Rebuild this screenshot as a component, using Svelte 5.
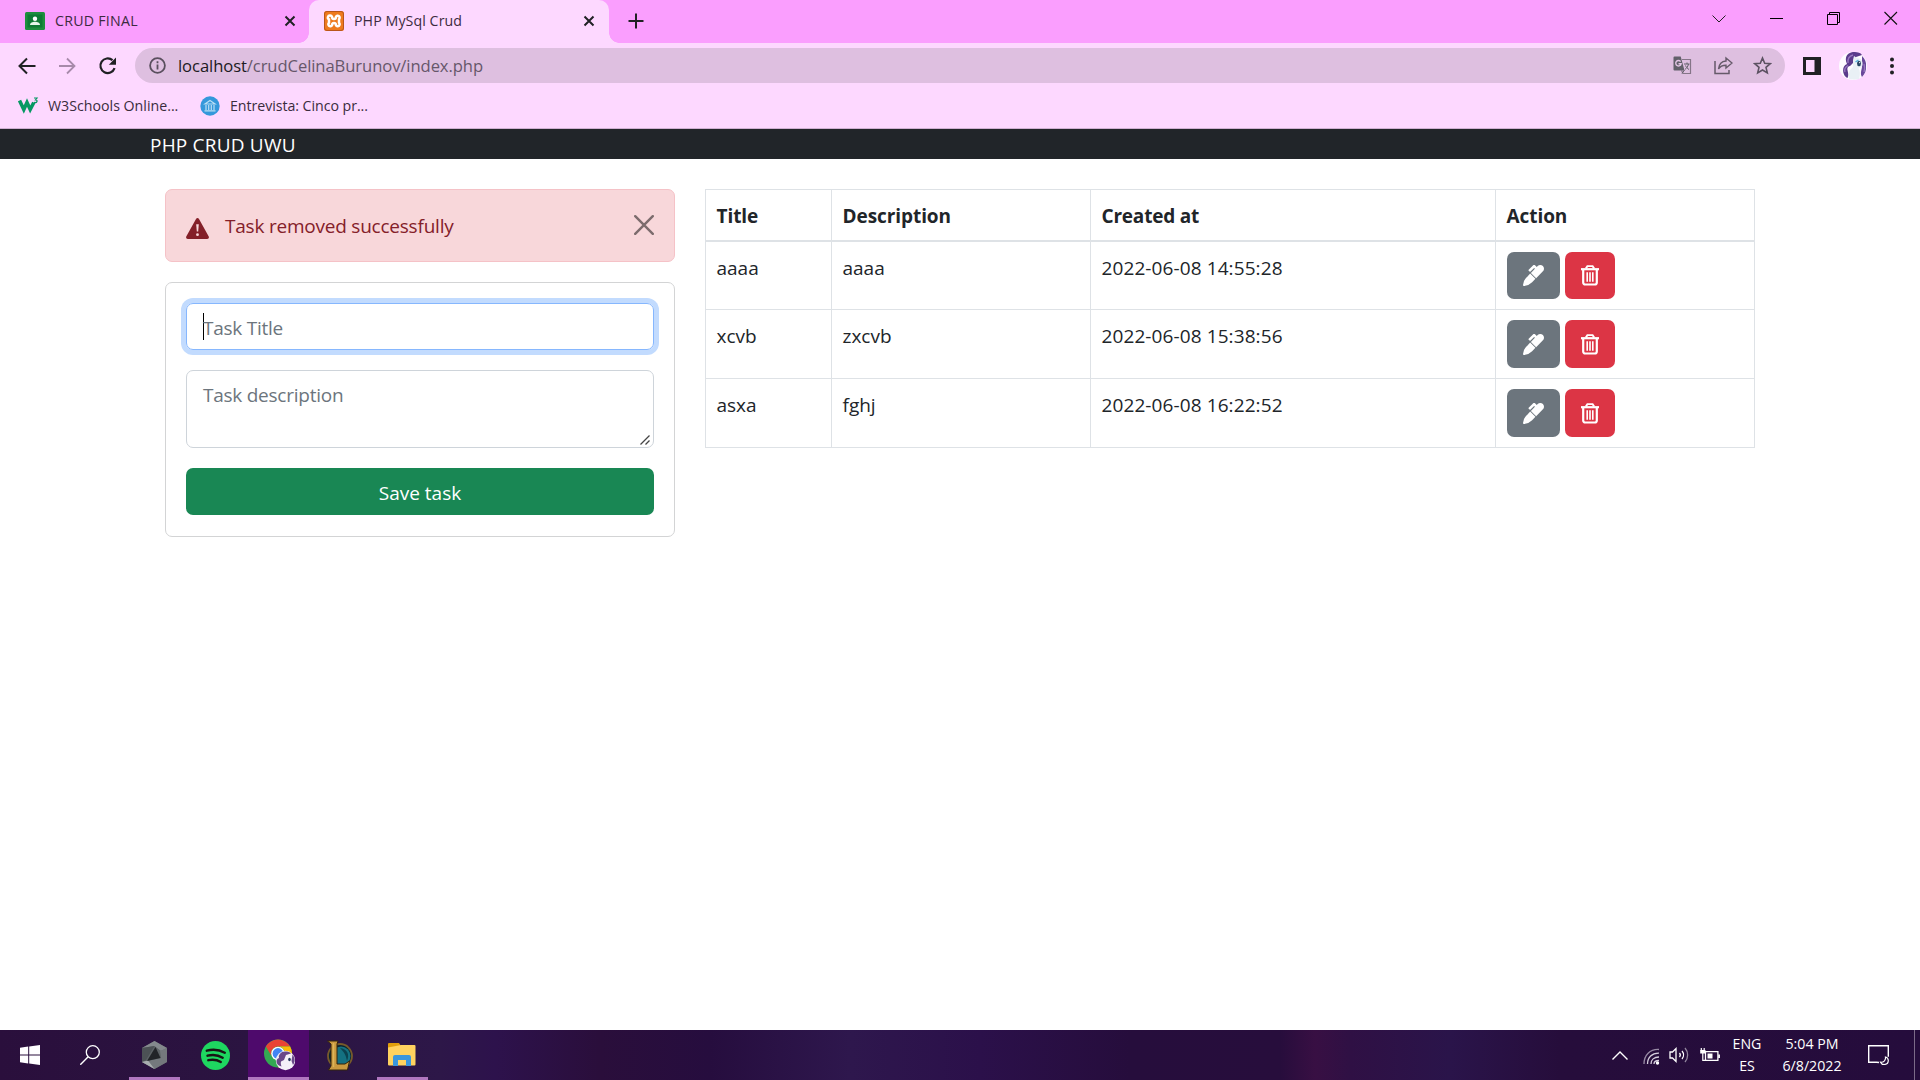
<script>
  const rows = [
    { title: 'aaaa', description: 'aaaa', created: '2022-06-08 14:55:28' },
    { title: 'xcvb', description: 'zxcvb', created: '2022-06-08 15:38:56' },
    { title: 'asxa', description: 'fghj', created: '2022-06-08 16:22:52' }
  ];
</script>

<div class="screen">
  <div class="tabs">
    <div class="tab first">
      <svg class="fav" width="20" height="20" viewBox="0 0 20 20"><rect width="20" height="18" y="1" rx="1.500" fill="#1e8e3e"/><rect x="2.500" y="3.500" width="15" height="13" fill="#0f7a34"/><circle cx="10" cy="7.800" r="2.200" fill="#fff"/><path d="M5 14c0-2.300 2.500-3.200 5-3.200s5 .9 5 3.200z" fill="#e6f5ea"/></svg>
      <span class="tab-text t1">CRUD FINAL</span>
      <svg class="x" width="12" height="12" viewBox="0 0 12 12"><path d="M1.500 1.500l9 9M10.500 1.500l-9 9" stroke="#202124" stroke-width="2"/></svg>
    </div>
    <div class="tab active">
      <svg class="fav" width="20" height="20" viewBox="0 0 20 20"><rect width="20" height="20" rx="2.500" fill="#ee7a1f"/><rect x=".5" y=".5" width="19" height="19" rx="2.500" fill="none" stroke="#b9561a"/><path d="M6 4.500a2 2 0 0 0-1 3.800v3.400a2 2 0 1 0 3 2.600c0-3 4-3 4 0a2 2 0 1 0 3-2.600V8.300a2 2 0 1 0-3-2.600c0 3-4 3-4 0a2 2 0 0 0-2-1.200z" fill="none" stroke="#fff" stroke-width="2.500"/></svg>
      <span class="tab-text t2">PHP MySql Crud</span>
      <svg class="x" width="12" height="12" viewBox="0 0 12 12"><path d="M1.500 1.500l9 9M10.500 1.500l-9 9" stroke="#202124" stroke-width="2"/></svg>
    </div>
    <svg class="plus" width="16" height="16" viewBox="0 0 16 16"><path d="M8 .5v15M.5 8h15" stroke="#202124" stroke-width="2"/></svg>
    <div class="window-buttons">
      <svg width="58" height="38" viewBox="0 0 58 38"><path d="M22.500 15.500l6.500 6.500 6.500-6.500" fill="none" stroke="#222"/></svg>
      <svg width="57" height="38" viewBox="0 0 57 38"><path d="M22 18.500h13" stroke="#000"/></svg>
      <svg width="57" height="38" viewBox="0 0 57 38"><path d="M22.500 14.500h10v10h-10zM24.500 14.500v-2h10v10h-2" fill="none" stroke="#000"/></svg>
      <svg width="58" height="38" viewBox="0 0 58 38"><path d="M22.500 12l12.500 12.500M35 12L22.500 24.500" stroke="#111" stroke-width="1.100"/></svg>
    </div>
  </div>

  <div class="toolbar">
    <div class="nav-icons">
      <svg width="18" height="18" viewBox="0 0 18 18"><path d="M17.500 9H2M9 1.500L1.500 9 9 16.500" fill="none" stroke="#202124" stroke-width="2"/></svg>
      <svg width="18" height="18" viewBox="0 0 18 18"><path d="M1 9h15M9 1.500L16.500 9 9 16.500" fill="none" stroke="#a78aaa" stroke-width="1.800"/></svg>
      <svg width="20" height="20" viewBox="0 0 20 20"><path d="M14.500 4.200A7.300 7.300 0 1 0 16.600 12.200" fill="none" stroke="#202124" stroke-width="2.200"/><path d="M18 1.500v7.200h-7.200z" fill="#202124"/></svg>
    </div>
    <div class="omnibox">
      <svg class="info" width="17" height="17" viewBox="0 0 17 17"><circle cx="8.500" cy="8.500" r="7.400" fill="none" stroke="#5a4f5e" stroke-width="1.800"/><path d="M8.500 7.600v4.900M8.500 4.300v1.900" stroke="#5a4f5e" stroke-width="1.800"/></svg>
      <span class="url"><b>localhost</b>/crudCelinaBurunov/index.php</span>
      <svg class="translate" width="19" height="19" viewBox="0 0 19 19"><path d="M9 3.500h8.500v14H10l-1.500-3" fill="none" stroke="#857588" stroke-width="1.200"/><path d="M1.500.5h6.200l3.800 14h-10a1 1 0 0 1-1-1v-12a1 1 0 0 1 1-1z" fill="#62606a"/><path d="M7.600 5.600a2.700 2.700 0 1 0 .5 2.200H5.500" fill="none" stroke="#e2c4e4" stroke-width="1.400"/><path d="M11 8h5.500M14 6.500V8M15.500 8c-.5 3-2.500 4.500-3.500 5.500M12.500 9.500c.5 1.500 2 3 3.500 4M11.500 14l-2.500 3.500" fill="none" stroke="#62606a" stroke-width="1"/></svg>
      <svg class="share" width="19" height="19" viewBox="0 0 19 19"><path d="M1 5v12.500h14V14" fill="none" stroke="#665a6a" stroke-width="1.500"/><path d="M12 2l6 5-6 5V9.200c-4 0-6 1.300-7.500 3.800C5 8.500 7.500 5.300 12 5z" fill="none" stroke="#665a6a" stroke-width="1.400"/></svg>
      <svg class="star" width="19" height="19" viewBox="0 0 19 19"><path d="M9.500 2l2.200 5.200 5.600.5-4.300 3.700 1.300 5.500-4.800-2.900-4.800 2.900L6 11.400 1.700 7.700l5.600-.5z" fill="none" stroke="#5c5262" stroke-width="1.600"/></svg>
    </div>
    <svg class="panel" width="18" height="18" viewBox="0 0 18 18"><path d="M0 0h18v18H0zM3 3v12h8.500V3z" fill="#202124" fill-rule="evenodd"/></svg>
    <svg class="avatar" width="28" height="28" viewBox="0 0 28 28">
      <circle cx="14" cy="14" r="14" fill="#fdfbff"/>
      <path d="M8 12C5.500 7 7 2 12 .5c4-1 9-.5 11 2.500l-6 2-3 6-3 3c-2 0-3 2-2.500 4 .5 3 1.500 5 0 8C3.500 24 2 14 8 12z" fill="#5b3b8c"/>
      <path d="M23 4c3 3 4.500 6 4 10 .5 4-1 8-4 11-2-3-.5-7 0-10z" fill="#6a479b"/>
      <path d="M9 11c-.5-4 1-7 5-8M6 20c-1-3 .5-5 3-6.500M25 20c1-3 1-5 0-8" stroke="#9877c0" fill="none" stroke-width="1.300"/>
      <path d="M14 8l1-4 3 2c4 0 6 3 5.500 6.500 0 2-2 3.500-4 3.500 2 3 1.500 7 .5 11l-5 .5-5-.5c0-4-1-5 1-9l3-3z" fill="#e9f0f5"/>
      <ellipse cx="20" cy="11.500" rx="2" ry="2.700" fill="#284866"/>
      <path d="M16.500 10l3-2" stroke="#58b5df" stroke-width="1.500"/>
      <circle cx="20.600" cy="10.600" r=".6" fill="#fff"/>
    </svg>
    <svg class="dots" width="4" height="18" viewBox="0 0 4 18"><g fill="#202124"><circle cx="2" cy="2.500" r="2"/><circle cx="2" cy="9" r="2"/><circle cx="2" cy="15.500" r="2"/></g></svg>
  </div>

  <div class="bookmarks">
    <svg class="w3" width="21" height="17" viewBox="0 0 21 17"><path d="M1.500 3.500l4.300 9 3.200-7 3.200 7 3.600-7" fill="none" stroke="#059862" stroke-width="3.600"/><path d="M16 1h3l-1.500 1.900c2.500 0 2 3.300-1.500 2.500" fill="none" stroke="#059862" stroke-width="1.200"/></svg>
    <span class="b1">W3Schools Online...</span>
    <svg class="bank" width="20" height="20" viewBox="0 0 20 20"><circle cx="10" cy="10" r="9.700" fill="#3498db"/><path d="M5 8h10l-5-3.500zM6 9v5M8.700 9v5M11.300 9v5M14 9v5M4.500 14.800h11" stroke="#b9def4" stroke-width="1.200" fill="none"/></svg>
    <span class="b2">Entrevista: Cinco pr...</span>
  </div>

  <div class="navbar">PHP CRUD UWU</div>

  <main>
    <section class="left">
      <div class="alert">
        <svg class="warn" width="23" height="21" viewBox="0 0 23 21"><path d="M10 .9c.7-1.200 2.300-1.200 3 0l9.600 17.300c.8 1.300 0 2.800-1.400 2.800H1.800C.4 21-.4 19.500.4 18.200z" fill="#842029"/><path d="M10.200 6.200h2.600l-.6 7.300h-1.400z" fill="#f8d7da"/><circle cx="11.500" cy="16.700" r="1.400" fill="#f8d7da"/></svg>
        <span class="p0">Task removed successfully</span>
        <svg class="close" width="20" height="20" viewBox="0 0 20 20"><path d="M1.200 1.200l17.600 17.600M18.800 1.200L1.200 18.800" stroke="#7c6c6d" stroke-width="2.400" stroke-linecap="round"/></svg>
      </div>
      <form class="card">
        <div class="field focus"><i class="caret"></i><span class="p1">Task Title</span></div>
        <div class="field area"><span class="p2">Task description</span>
          <svg class="grip" width="10" height="10" viewBox="0 0 10 10"><path d="M.5 9.500l9-9M5.500 9.500l4-4" stroke="#444" stroke-width="1.300"/></svg>
        </div>
        <button type="button" class="save"><span>Save task</span></button>
      </form>
    </section>

    <table>
      <colgroup><col class="c1"><col class="c2"><col class="c3"><col class="c4"></colgroup>
      <thead>
        <tr><th>Title</th><th>Description</th><th class="created">Created at</th><th>Action</th></tr>
      </thead>
      <tbody>
        {#each rows as row}
          <tr>
            <td>{row.title}</td>
            <td>{row.description}</td>
            <td class="date">{row.created}</td>
            <td class="act">
              <div class="actions">
                <span class="btn edit"><svg width="21" height="21" viewBox="0 0 512 512"><path fill="#fff" d="M93.950 290.030A327.038 327.038 0 0 0 .17 485.110l-.03.23c-1.700 15.280 11.210 28.200 26.490 26.510a327.020 327.020 0 0 0 195.340-93.800l81-81-128.020-128.020-81 87.200zM485.490 26.510c-35.350-35.350-92.670-35.350-128.020 0l-21.760 21.760-36.560-36.550c-15.620-15.620-40.950-15.620-56.560 0L138.470 115.840c-6.250 6.250-6.250 16.380 0 22.630l22.620 22.620c6.250 6.250 16.380 6.250 22.630 0l87.150-87.150 19.590 19.590L191.980 192 320 320.020l165.490-165.490c35.350-35.350 35.350-92.660 0-128.020z"/></svg></span>
                <span class="btn delete"><svg width="18" height="21" viewBox="0 0 18 21"><path d="M2.200 4.500V17.500a2 2 0 0 0 2 2h9.600a2 2 0 0 0 2-2V4.500" fill="none" stroke="#fff" stroke-width="2.200"/><path d="M0 4.200h18" stroke="#fff" stroke-width="2.200"/><path d="M4.800 3.500l1.600-2.400h5.200l1.600 2.400" fill="none" stroke="#fff" stroke-width="1.900"/><path d="M6.200 7.200v9.500M9 7.200v9.500M11.800 7.200v9.500" stroke="#fff" stroke-width="1.600"/></svg></span>
              </div>
            </td>
          </tr>
        {/each}
      </tbody>
    </table>
  </main>

  <footer>
    <div class="task start"><svg width="20" height="20" viewBox="0 0 20 20"><path d="M0 2.800l8.200-1.200v7.900H0zM9.200 1.400L20 0v9.500H9.200zM0 10.500h8.200v7.900L0 17.200zM9.200 10.500H20V20L9.200 18.600z" fill="#fff"/></svg></div>
    <div class="task search"><svg width="20" height="20" viewBox="0 0 20 20"><circle cx="12.800" cy="7.200" r="6.500" fill="none" stroke="#fff" stroke-width="1.300"/><path d="M8.200 11.800L.3 19.700" stroke="#fff" stroke-width="1.400"/></svg></div>
    <div class="task open cube"><svg width="27" height="28" viewBox="0 0 27 28"><path d="M13.500 0L26 7v14l-12.500 7L1 21V7z" fill="#5d6266"/><path d="M13.500 0L26 7l-6 3-6.500-5L1 7z" fill="#84898d"/><path d="M1 7l12.500-2L5 19l-4 2z" fill="#4c5155"/><path d="M26 7v14l-12.500 7L1 21l5-1 14-3-1-7z" fill="#74787d"/><path d="M13.500 28L1 21l6-1.500z" fill="#a9adb0"/><path d="M14.500 6L19.500 17 6 20z" fill="#222428"/></svg></div>
    <div class="task spotify"><svg width="29" height="29" viewBox="0 0 29 29"><circle cx="14.500" cy="14.500" r="14.500" fill="#1ed760"/><path d="M5.800 9.700c6.200-1.600 12.500-1 18 2M6.500 14.700c5.500-1.400 10.700-.7 15.200 2M7.300 19.200c4.500-1 8.700-.5 12.500 1.800" fill="none" stroke="#191414" stroke-width="2.400" stroke-linecap="round"/></svg></div>
    <div class="task open chrome"><svg width="31" height="32" viewBox="0 0 31 32">
      <circle cx="14" cy="14.500" r="14" fill="#34a853"/>
      <path d="M1.900 7.500A14 14 0 0 1 26.100 7.500H14a7 7 0 0 0-6.200 10z" fill="#ea4335"/>
      <path d="M26.100 7.500A14 14 0 0 1 14 28.500l6-10.500a7 7 0 0 0-6-10.500z" fill="#fbbc05"/>
      <circle cx="14" cy="14.500" r="6.800" fill="#fff"/><circle cx="14" cy="14.500" r="5.400" fill="#4285f4"/>
      <circle cx="21.500" cy="21.500" r="9.700" fill="#f4f0f8"/>
      <path d="M15 19c-1-3 2-6.500 6-6.500 3 0 5 .5 6 2l-5 1.500-2 5-3 1.500c-.5 2 0 3 .5 5-3-.5-5-2.500-5-5 0-2 1-3 2.500-3.500z" fill="#694889"/>
      <path d="M28.500 15.500c2.500 3 3 7 .5 10.500l-1.500-4z" fill="#694889"/>
      <ellipse cx="25.500" cy="20.500" rx="1.300" ry="1.800" fill="#26395c"/></svg></div>
    <div class="task lol"><svg width="28" height="31" viewBox="0 0 28 31"><circle cx="15" cy="16" r="12" fill="#0c2430" stroke="#765a2b" stroke-width="1.800"/><circle cx="16" cy="16" r="9.500" fill="#147181"/><path d="M15 8c7 1 10 6 7 13-1-6-3-9-7-13z" fill="#0b4350"/><path d="M2.500 1h10.500l-1 3v20H20l4.500-3-2 9H3.500L6 26V4z" fill="#c9993f" stroke="#33240d"/><path d="M8.500 3v24" stroke="#dcb559" stroke-width="1.500"/></svg></div>
    <div class="task open explorer"><svg width="28" height="24" viewBox="0 0 28 24"><path d="M0 1a1 1 0 0 1 1-1h10l2 3v5H0z" fill="#e09e0b"/><path d="M0 4.500L13 2h13.500a1 1 0 0 1 1 1v18.500a1 1 0 0 1-1 1H1a1 1 0 0 1-1-1z" fill="#ffd25f"/><path d="M5 23v-9a2 2 0 0 1 2-2h14a2 2 0 0 1 2 2v9h-5v-6h-8v6z" fill="#3a96dd"/></svg></div>
    <div class="tray">
      <svg class="chev" width="16" height="9" viewBox="0 0 16 9"><path d="M.5 8.500L8 1l7.500 7.500" fill="none" stroke="#fff" stroke-width="1.400"/></svg>
      <svg class="wifi" width="17" height="17" viewBox="0 0 17 17"><g fill="none" stroke="#d6cedd" stroke-width="1.300"><path d="M1 16C1 7 7 1 16 1.500" opacity=".65"/><path d="M4.500 16C4.500 9.500 9 5 16 5.200"/><path d="M8 16c0-4 3-7 8-7"/><path d="M11 16c0-2 2-3.500 5-3.500"/></g><circle cx="14.500" cy="15" r="1.700" fill="#fff"/></svg>
      <svg class="sound" width="20" height="18" viewBox="0 0 20 18"><g fill="none" stroke="#fff" stroke-width="1.300"><path d="M1 6h2.500L7 2.500v13L3.500 12H1z"/><path d="M10.500 7c1 1.200 1 2.800 0 4"/><path d="M13 5c2 2.300 2 5.700 0 8"/><path d="M16 2c3.500 4 3.500 10 0 14" opacity=".5"/></g></svg>
      <svg class="battery" width="20" height="15" viewBox="0 0 20 15"><path d="M5.500 3.600h12.400v8.800H5.500zM19.300 6.500v3.500" fill="none" stroke="#fff" stroke-width="1.300"/><path d="M7.500 5.500h5v5h-5z" fill="#fff"/><path d="M.2 2h5.300v3.500H.2z" fill="#fff"/><path d="M1.300 0v3M4.200 0v3M2.800 5v7.400H6" fill="none" stroke="#fff" stroke-width="1.200"/></svg>
      <div class="stack lang"><span>ENG</span><span>ES</span></div>
      <div class="stack clock"><span>5:04 PM</span><span>6/8/2022</span></div>
      <svg class="notice" width="21" height="21" viewBox="0 0 21 21"><path d="M11 17.500L8.500 17.300H.7V.7h19.600v11" fill="none" stroke="#fff" stroke-width="1.400"/><path d="M17.500 12c.5 3-1.500 5.500-5 5.200 1.500 3.300 7.800 3.300 7.800-1.700 0-1.600-1-3-2.800-3.500z" fill="none" stroke="#fff" stroke-width="1.200"/></svg>
      <i class="edge"></i>
    </div>
  </footer>
</div>

<style>
  :global(body) { margin: 0; overflow: hidden; background: #fff; }
  .screen { width: 1920px; height: 1080px; display: flex; flex-direction: column; font-family: "Open Sans", "Noto Sans", sans-serif; font-size: 19px; line-height: 30px; color: #212529; background: #fff; box-sizing: border-box; white-space: nowrap; }
  .screen *, .screen :global(*) { box-sizing: border-box; }
  svg { display: block; flex: none; }

  .tabs { height: 43px; flex: none; background: #fa9efe; display: flex; align-items: center; font-size: 14.200px; line-height: 20px; color: #3c2b40; }
  .tab { display: flex; align-items: center; height: 43px; padding-bottom: 1px; }
  .tab .fav { margin-right: 10px; }
  .t1 { letter-spacing: .25px; }
  .t2 { letter-spacing: .08px; }
  .first { width: 309px; padding-left: 25px; padding-right: 13px; }
  .active { width: 300px; background: #fdd8ff; border-radius: 10px 10px 0 0; padding-left: 15px; padding-right: 14px; position: relative; }
  .active::before, .active::after { content: ""; position: absolute; bottom: 0; width: 10px; height: 10px; }
  .active::before { left: -10px; background: radial-gradient(circle at 0 0, transparent 9.500px, #fdd8ff 10px); }
  .active::after { right: -10px; background: radial-gradient(circle at 100% 0, transparent 9.500px, #fdd8ff 10px); }
  .tab .x { margin-left: auto; }
  .plus { margin-left: 19px; margin-bottom: 1px; }
  .window-buttons { margin-left: auto; display: flex; margin-bottom: 5px; }

  .toolbar { height: 45px; flex: none; background: #fdd8ff; display: flex; align-items: center; }
  .nav-icons { width: 135px; padding-left: 18px; display: flex; align-items: center; gap: 22px; }
  .omnibox { width: 1650px; height: 35px; border-radius: 18px; background: #debfe0; display: flex; align-items: center; padding-left: 14px; padding-right: 13px; font-size: 16.600px; color: #66576a; }
  .url { margin-left: 12px; letter-spacing: -.08px; }
  .url b { font-weight: 400; color: #201a22; }
  .translate { margin-left: auto; }
  .share { margin-left: 22px; }
  .star { margin-left: 20px; }
  .panel { margin-left: 18px; }
  .avatar { margin-left: 18px; }
  .dots { margin-left: 23px; }

  .bookmarks { height: 41px; flex: none; background: #fdd8ff; border-bottom: 1px solid #cfb0d2; display: flex; align-items: center; padding: 0 0 5px 18px; font-size: 14.200px; line-height: 20px; color: #3a2c3d; }
  .b1 { margin-left: 9px; width: 152px; }
  .b2 { margin-left: 10px; letter-spacing: -.05px; }

  .navbar { height: 30px; flex: none; background: #212529; color: #fff; padding: 1px 0 0 150px; letter-spacing: .2px; }

  main { flex: 1; display: flex; gap: 30px; padding: 30px 164px 30px 165px; align-items: flex-start; }
  .left { width: 510px; flex: none; display: flex; flex-direction: column; gap: 20px; }
  .alert { height: 73px; border: 1px solid #f5c2c7; border-radius: 7px; background: #f8d7da; color: #842029; display: flex; align-items: center; padding: 0 20px; }
  .warn { margin: 5px 16px 0 0; }
  .p0 { letter-spacing: -.22px; }
  .close { margin: 0 0 2px auto; }
  .card { height: 255px; border: 1px solid #d3d4d5; border-radius: 7px; padding: 20px 20px; display: flex; flex-direction: column; gap: 20px; }
  .field { height: 47px; border: 1px solid #ced4da; border-radius: 7px; padding: 9px 16px 0; color: #6c757d; display: flex; align-items: flex-start; position: relative; flex: none; }
  .focus { border-color: #86b7fe; box-shadow: 0 0 0 5px #c2dbfe; }
  .p1, .p2 { letter-spacing: -.25px; }
  .caret { width: 1px; height: 27px; margin-right: -1px; background: #000; }
  .area { height: 78px; }
  .grip { position: absolute; right: 3px; bottom: 2px; }
  .save { height: 47px; flex: none; border: 0; border-radius: 7px; background: #198754; color: #fff; font: inherit; padding: 2px 0 0; }

  table { width: 1050px; flex: none; table-layout: fixed; border-collapse: collapse; }
  .c1 { width: 126px; }
  .c2 { width: 259px; }
  .c3 { width: 405px; }
  .c4 { width: 259px; }
  th, td { border: 1px solid #dee2e6; text-align: left; vertical-align: top; padding: 11px 10px 0 10.500px; }
  th { height: 51px; font-weight: 700; border-bottom-width: 2px; letter-spacing: -.07px; }
  .created { letter-spacing: -.2px; }
  td { height: 69px; }
  .date { letter-spacing: .1px; }
  .act { padding-top: 10px; }
  .actions { display: flex; gap: 5px; }
  .btn { height: 47px; border-radius: 7px; display: flex; align-items: center; justify-content: center; }
  tr + tr .btn { height: 48px; padding-top: 1px; }
  .edit { width: 53px; background: #6c757d; }
  .delete { width: 50px; background: #dc3545; }

  footer { height: 50px; flex: none; display: flex; color: #fff; background: linear-gradient(90deg, #2a0f3c 0, #2b1441 250px, #2d1748 440px, #2d124c 495px, #2a0e3b 600px, #260d3e 710px, #2e174d 850px, #2b104a 980px, #260d3c 1130px, #270d3c 1280px, #380f43 1315px, #2f1044 1350px, #2a144a 1450px, #260d3b 1560px, #250c3c 1920px); }
  .task { display: flex; align-items: center; justify-content: center; height: 50px; }
  .open { border-bottom: 3px solid #b076bf; padding-top: 3px; }
  .start { width: 60px; }
  .search { width: 60px; }
  .cube { width: 51px; margin-left: 9px; }
  .spotify { width: 68px; padding-left: 3px; }
  .chrome { width: 61px; background: #4e0a6c; padding-left: 2px; }
  .lol { width: 62px; padding-right: 2px; }
  .explorer { width: 51px; margin-left: 6px; padding-right: 1px; }
  .tray { margin-left: auto; display: flex; align-items: center; font-size: 14.200px; line-height: 22px; }
  .wifi { margin-left: 15px; margin-top: 2px; }
  .sound { margin-left: 9px; }
  .battery { margin-left: 11px; }
  .stack { display: flex; flex-direction: column; align-items: center; }
  .lang { width: 30px; margin-left: 12px; }
  .clock { width: 64px; margin-left: 18px; }
  .notice { margin-left: 24px; }
  .edge { width: 1px; height: 50px; background: #7c6a88; margin: 0 5px 0 25px; }
</style>
